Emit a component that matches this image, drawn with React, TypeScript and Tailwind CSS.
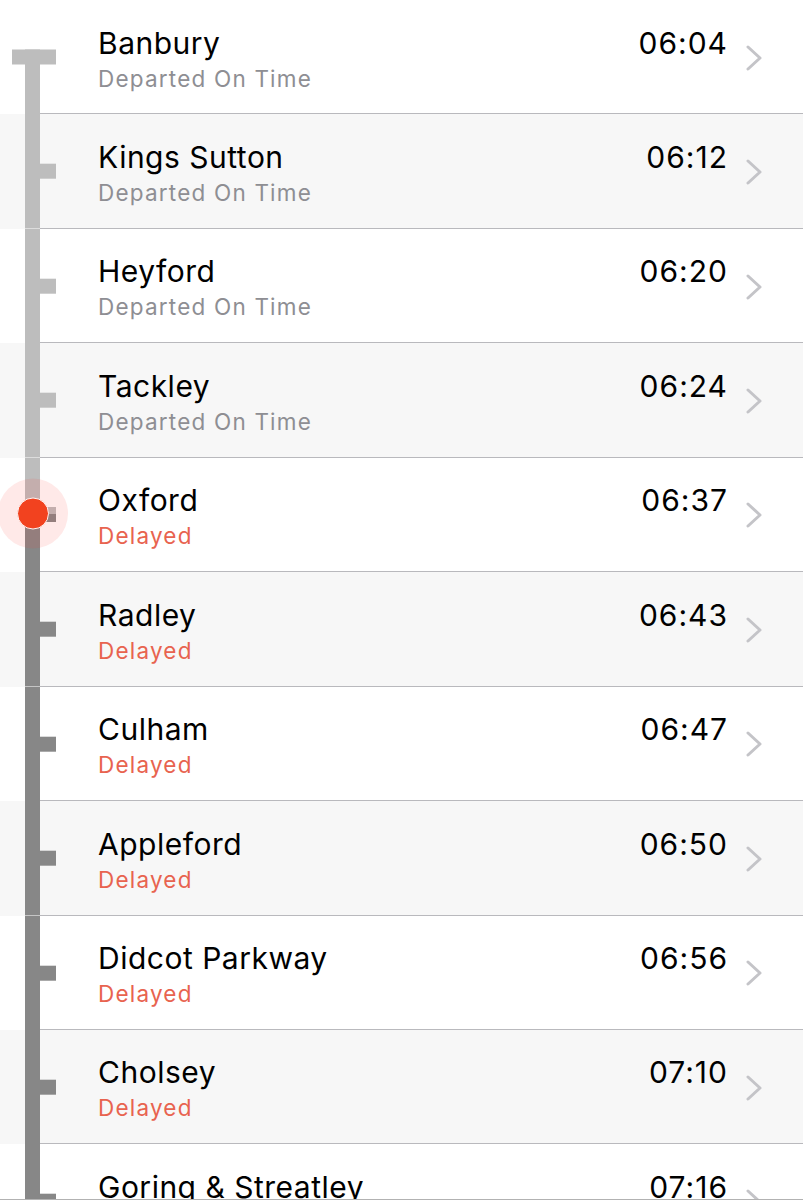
import React from "react";

type Status = "dep" | "cur" | "del";
const stations: [string, string, Status][] = [
  ["Banbury", "06:04", "dep"],
  ["Kings Sutton", "06:12", "dep"],
  ["Heyford", "06:20", "dep"],
  ["Tackley", "06:24", "dep"],
  ["Oxford", "06:37", "cur"],
  ["Radley", "06:43", "del"],
  ["Culham", "06:47", "del"],
  ["Appleford", "06:50", "del"],
  ["Didcot Parkway", "06:56", "del"],
  ["Cholsey", "07:10", "del"],
  ["Goring & Streatley", "07:16", "del"],
];

const H = 114.44;
const LIGHT = "#bdbdbd";
const DARK = "#878787";

function Track({ index, status }: { index: number; status: Status }) {
  const cy = 57.2;
  return (
    <svg width={40} height={H} className="block overflow-visible">
      {index === 0 ? (
        <>
          <rect x={25} y={49.5} width={15} height={H - 49.5} fill={LIGHT} />
          <rect x={12} y={49.5} width={44} height={15} fill={LIGHT} />
        </>
      ) : status === "cur" ? (
        <>
          <rect x={25} y={0} width={15} height={56} fill={LIGHT} />
          <rect x={25} y={56} width={15} height={H - 56} fill={DARK} />
          <rect x={40} y={49} width={16} height={7} fill={LIGHT} />
          <rect x={40} y={56} width={16} height={8} fill={DARK} />
          <circle cx={33} cy={55.5} r={35} fill="#ff3b30" fillOpacity={0.11} />
          <circle cx={33} cy={55.5} r={15.5} fill="#f2421f" stroke="#fff4f2" strokeWidth={1} />
        </>
      ) : (
        <>
          <rect x={25} y={0} width={15} height={H} fill={status === "dep" ? LIGHT : DARK} />
          <rect x={40} y={cy - 7.5} width={16} height={15} fill={status === "dep" ? LIGHT : DARK} />
        </>
      )}
    </svg>
  );
}

function Chevron() {
  return (
    <svg width={16} height={26} viewBox="0 0 16 26" className="block">
      <polyline
        points="2,2 14,13 2,24"
        fill="none"
        stroke="#c4c4c8"
        strokeWidth={3}
        strokeLinecap="round"
        strokeLinejoin="round"
      />
    </svg>
  );
}

export default function App() {
  return (
    <div
      className="relative h-[1200px] w-[803px] overflow-hidden bg-white"
      style={{ fontFamily: "Inter, 'Noto Sans', 'Liberation Sans', sans-serif" }}
    >
      {stations.map(([name, time, status], i) => (
        <div
          key={name}
          className={`flex h-[114.44px] ${i % 2 === 1 ? "bg-[#f7f7f7]" : "bg-white"}`}
        >
          <div className="w-[40px] shrink-0">
            <Track index={i} status={status} />
          </div>
          <div className="flex flex-1 items-stretch border-b border-[#b9b9bd] pl-[58px]">
            <div className="flex flex-1 flex-col pt-[24.5px]">
              <div className="flex items-baseline justify-between">
                <span className="text-[30px] leading-[36px] text-black tracking-[0.5px]">{name}</span>
                <span className="mr-[-1px] text-[30px] leading-[36px] text-black tracking-[1px]">{time}</span>
              </div>
              <div
                className={`mt-[4px] text-[22.5px] leading-[28px] tracking-[1.2px] ${
                  status === "dep" ? "text-[#8e8e93]" : "text-[#e8634f]"
                }`}
              >
                {status === "dep" ? "Departed On Time" : "Delayed"}
              </div>
            </div>
            <div className="ml-[19px] mr-[41px] flex items-center pt-[2px]">
              <Chevron />
            </div>
          </div>
        </div>
      ))}
      <div className="absolute bottom-0 left-0 right-0 h-px bg-[#b2b2b2]" />
    </div>
  );
}
